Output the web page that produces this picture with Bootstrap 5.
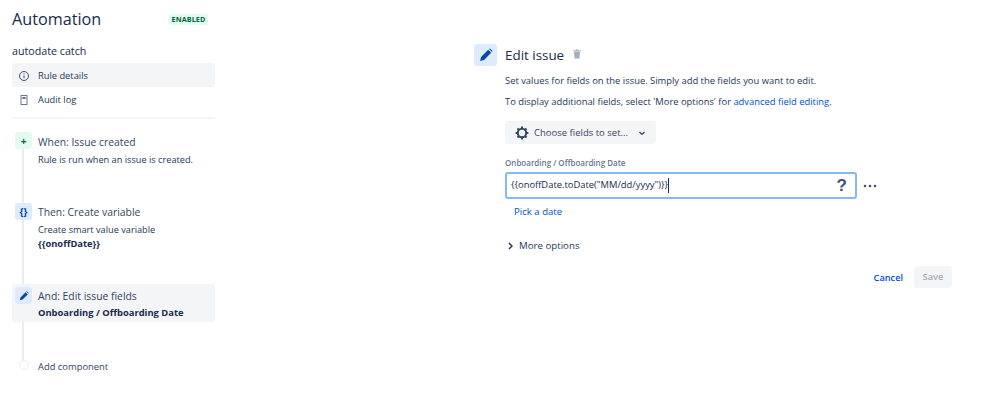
<!doctype html>
<html lang="en"><head><meta charset="utf-8"><title>Automation</title>
<link href="https://cdn.jsdelivr.net/npm/bootstrap@5.3.0/dist/css/bootstrap.min.css" rel="stylesheet">
<style>
html,body{height:402px;overflow:hidden}
body{background:#fff;font-family:"Open Sans","Noto Sans",sans-serif;font-size:9.4px;line-height:14px;color:#253858}
a{color:#0052cc;text-decoration:none}
.side{width:203px;margin-left:12px;padding-top:7px;flex:none}
.apptitle{font-size:16.2px;line-height:24px;font-weight:400;color:#172b4d;margin:0}
.state{background:#e3fcef;color:#006644;font-size:7.2px;font-weight:700;line-height:11px;padding:0 2px;width:39px;border-radius:2px;margin-right:7px;text-align:center;letter-spacing:.1px}
.rulename{font-size:10.7px;line-height:14px;margin-top:13px;color:#172b4d}
.navrow{height:24px;border-radius:3px;margin:0;font-size:9.3px;padding-top:1px}
.navrow.first{margin-top:5px}
.navrow svg{margin-left:6px;margin-right:8px}
.sel{background:#f4f5f7}
.navgap{height:2px;background:#f4f5f7;margin-top:6px}
.flow{position:relative;margin-top:10px}
.flow::before{content:"";position:absolute;left:10px;top:10px;height:222px;width:2px;background:#ebecf0}
.stp{position:relative;border-radius:3px;padding:3px;column-gap:6px}
.ico{width:17px;height:17px;border-radius:3px;flex:none;font-size:10px;font-weight:700}
.ig{background:#e3fcef;color:#006644}
.ib{background:#deebff;color:#0747a6}
.st-t{font-size:10.35px;line-height:17px;color:#344563;margin-top:1px}
.s1 .st-t{margin-top:2px}
.st-d{font-size:9.2px;line-height:14px;margin-top:2px;color:#253858}
.st-b{font-weight:700;color:#172b4d;font-size:9.4px}
.s2{margin-top:30px}.s3{margin-top:30px;padding-bottom:2px}.s4{margin-top:32px}
.s3 .st-d{margin-top:1px}
.dot{width:10px;height:10px;border-radius:50%;background:#fff;border:1px solid #ebecf0;flex:none;margin:3px 3px 0 4px;position:relative}
.s4 .st-t{font-size:9.4px}
.main{margin-left:259px;padding-top:44px;width:479px;flex:none}
.bigico{width:23px;height:22px;background:#deebff;border-radius:3px;flex:none}
.h-t{font-size:13.4px;line-height:21px;color:#172b4d;margin:0 0 0 8px;font-weight:500;padding-top:1px}
.trash{margin:0 0 3px 8px}
.body{margin-left:31px}
.body p{font-size:9.4px;line-height:14px;margin:0;color:#253858}
.p1{margin-top:8px !important}.p2{margin-top:7px !important}
.pick{background:#f4f5f7;border:0;border-radius:3px;width:151px;height:23px;margin-top:12px;font-size:9.5px;color:#344563;padding:0 0 0 10px;column-gap:5px}
.lbl{font-size:8px;line-height:11px;font-weight:600;color:#6b778c;margin-top:13px}
.inrow{margin-top:4px}
.datebox{width:352px;height:27px;border:2px solid #85b8ff;border-radius:3px;padding:0 8px 0 4px;font-size:9.4px;color:#172b4d;background:#fff;flex:none}
.q{font-size:17px;font-weight:700;color:#42526e;font-family:"Liberation Sans",sans-serif}
.caret{display:inline-block;width:1px;height:15px;background:#172b4d;vertical-align:middle}
.dots{margin-left:6px}
.pickd{display:block;margin:6px 0 0 9px;font-size:9.6px;line-height:14px}
.more{margin-top:20px;font-size:9.7px;color:#253858;column-gap:6px;padding-left:3px}
.foot{margin-top:13px;width:447px;column-gap:11px}
.foot a{font-size:9.2px;font-weight:600;margin-top:1px}
.sv{background:#f4f5f7;color:#a5adba;border:0;border-radius:3px;width:38px;height:22px;font-size:9.4px;font-weight:600;padding:0}
</style></head><body>
<div class="d-flex">
<aside class="side">
 <div class="d-flex justify-content-between align-items-center"><h1 class="apptitle">Automation</h1><span class="state">ENABLED</span></div>
 <div class="rulename">autodate catch</div>
 <div class="navrow first sel d-flex align-items-center"><svg width="12" height="12" viewBox="0 0 12 12" fill="none" stroke="#42526e"><circle cx="6" cy="6" r="4.5"/><path d="M6 5.4v3M6 3.2v1.1"/></svg>Rule details</div>
 <div class="navrow d-flex align-items-center"><svg width="12" height="12" viewBox="0 0 12 12"><path fill="#6b778c" fill-rule="evenodd" d="M2.5 1h7v10h-7zM3.5 2v8h5V2z"/><path fill="#6b778c" d="M4.3 3h3.4v2H4.3z"/></svg>Audit log</div>
 <div class="navgap"></div>
 <div class="flow">
  <div class="stp s1 d-flex"><div class="ico ig d-flex align-items-center justify-content-center">+</div><div><div class="st-t">When: Issue created</div><div class="st-d">Rule is run when an issue is created.</div></div></div>
  <div class="stp s2 d-flex"><div class="ico ib d-flex align-items-center justify-content-center">{}</div><div><div class="st-t">Then: Create variable</div><div class="st-d">Create smart value variable<br><span class="st-b">{{onoffDate}}</span></div></div></div>
  <div class="stp s3 sel d-flex"><div class="ico ib d-flex align-items-center justify-content-center"><svg width="10" height="10" viewBox="0 0 10 10"><path fill="#0747a6" d="M.8 9.2l.7-2.8L6.6 1.3l2.1 2.1-5.1 5.1zM7.2.7l.6-.4 1.9 1.9-.4.6z"/></svg></div><div><div class="st-t">And: Edit issue fields</div><div class="st-d st-b">Onboarding / Offboarding Date</div></div></div>
  <div class="stp s4 d-flex"><div class="dot"></div><div class="st-t">Add component</div></div>
 </div>
</aside>
<main class="main">
 <div class="d-flex align-items-center"><div class="bigico d-flex align-items-center justify-content-center"><svg width="14" height="14" viewBox="0 0 10 10"><path fill="#0747a6" d="M.8 9.2l.7-2.8L6.6 1.3l2.1 2.1-5.1 5.1zM7.2.7l.6-.4 1.9 1.9-.4.6z"/></svg></div><div class="h-t">Edit issue</div><svg class="trash" width="10" height="10" viewBox="0 0 10 10"><path fill="#a5adba" d="M1 1.5h8v1H1zM3.5.5h3v1h-3zM2 3h6l-.6 6.5H2.6z"/></svg></div>
 <div class="body">
  <p class="p1">Set values for fields on the issue. Simply add the fields you want to edit.</p>
  <p class="p2">To display additional fields, select 'More options' for <a href="#">advanced field editing</a>.</p>
  <button class="pick d-flex align-items-center" type="button"><svg width="14" height="14" viewBox="0 0 14 14"><circle cx="7" cy="7" r="4.2" fill="none" stroke="#344563" stroke-width="2"/><path stroke="#344563" stroke-width="2" d="M7 .6v2.2M7 11.2v2.2M.6 7h2.2M11.2 7h2.2M2.5 2.5l1.5 1.5M10 10l1.5 1.5M2.5 11.5L4 10M10 4l1.5-1.5"/></svg><span>Choose fields to set...</span><svg class="ms-1" width="10" height="10" viewBox="0 0 10 10"><path fill="none" stroke="#344563" stroke-width="1.4" d="M2.5 4l2.5 2.4L7.5 4"/></svg></button>
  <div class="lbl">Onboarding / Offboarding Date</div>
  <div class="inrow d-flex align-items-center"><div class="datebox d-flex align-items-center justify-content-between"><span>{{onoffDate.toDate("MM/dd/yyyy")}}<span class="caret"></span></span><span class="q">?</span></div><svg class="dots" width="14" height="4" viewBox="0 0 14 4"><g fill="#42526e"><circle cx="2" cy="2" r="1.3"/><circle cx="7" cy="2" r="1.3"/><circle cx="12" cy="2" r="1.3"/></g></svg></div>
  <a class="pickd" href="#">Pick a date</a>
  <div class="more d-flex align-items-center"><svg width="5" height="8" viewBox="0 0 5 8"><path fill="none" stroke="#253858" stroke-width="1.5" d="M1 1l3 3-3 3"/></svg><span>More options</span></div>
  <div class="foot d-flex justify-content-end align-items-center"><a href="#">Cancel</a><button class="sv" type="button" disabled>Save</button></div>
 </div>
</main>
</div>
<script src="https://cdn.jsdelivr.net/npm/bootstrap@5.3.0/dist/js/bootstrap.bundle.min.js"></script>
</body></html>
